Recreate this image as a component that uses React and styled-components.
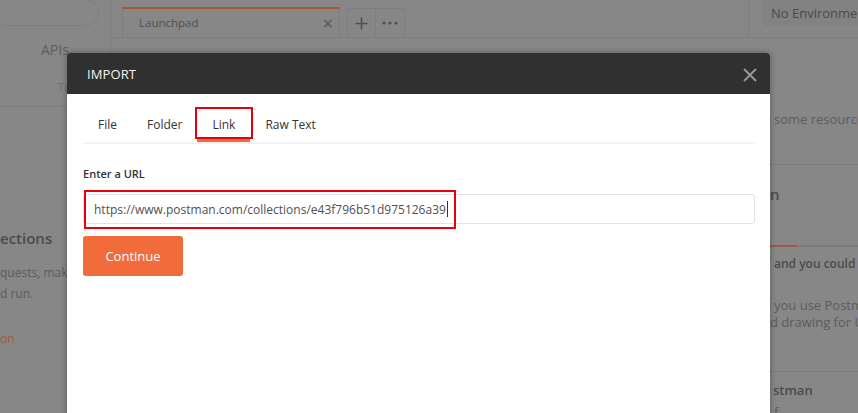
import React from "react";
import styled, { createGlobalStyle } from "styled-components";

const Global = createGlobalStyle`
  html, body { margin: 0; padding: 0; }
  body {
    font-family: "Open Sans", "Liberation Sans", sans-serif;
    overflow: hidden;
    width: 858px;
    height: 413px;
  }
  * { box-sizing: border-box; }
`;

const Root = styled.div`
  position: relative;
  width: 858px;
  height: 413px;
  overflow: hidden;
  background: #878787;
  display: flex;
`;

/* ---------- dimmed background app ---------- */
const Sidebar = styled.aside`
  width: 111px;
  flex: none;
  border-right: 1px solid #7e7e7e;
  display: flex;
  flex-direction: column;
  overflow: hidden;
`;

const SearchPill = styled.div`
  margin: -1px 0 0 -12px;
  width: 111px;
  height: 27px;
  border: 1px solid #7f7f7f;
  border-radius: 14px;
`;

const SideLink = styled.div`
  font-size: ${(p) => (p.$small ? "13px" : "14px")};
  color: ${(p) => (p.$small ? "#747474" : "#5c5c5c")};
  line-height: 18px;
  padding-left: ${(p) => p.$indent}px;
  margin-top: ${(p) => p.$mt}px;
  white-space: nowrap;
`;

const Divider = styled.div`
  height: 1px;
  background: #7c7c7c;
  margin-top: ${(p) => p.$mt || 0}px;
`;

const Heading = styled.div`
  font-size: ${(p) => p.$size || 15}px;
  font-weight: 600;
  color: #4b4b4b;
  line-height: 20px;
  margin-top: ${(p) => p.$mt}px;
  padding-left: ${(p) => p.$pl || 0}px;
  white-space: nowrap;
`;

const Para = styled.div`
  font-size: ${(p) => p.$size || 12}px;
  color: ${(p) => (p.$accent ? "#a3573b" : "#5c5c5c")};
  line-height: ${(p) => p.$lh || 21}px;
  margin-top: ${(p) => p.$mt || 0}px;
  padding-left: ${(p) => p.$pl || 0}px;
  white-space: nowrap;
`;

const Main = styled.main`
  flex: 1;
  display: flex;
  flex-direction: column;
  min-width: 0;
`;

const TopBar = styled.div`
  height: 38px;
  flex: none;
  display: flex;
  border-bottom: 1px solid #7d7d7d;
`;

const TabStrip = styled.div`
  flex: 1;
  display: flex;
  align-items: flex-end;
  padding-left: 11px;
`;

const AppTab = styled.div`
  width: 218px;
  height: 30px;
  border: 1px solid #7e7e7e;
  border-bottom: none;
  border-top: 2px solid #a3573b;
  display: flex;
  align-items: center;
  justify-content: space-between;
  padding: 0 6px 1px 16px;
  font-size: 11.5px;
  color: #505050;
`;

const TabClose = styled.span`
  font-size: 18px;
  color: #555;
  line-height: 1;
`;

const StripButton = styled.div`
  width: 29px;
  height: 29px;
  margin-left: ${(p) => p.$ml || 0}px;
  border: 1px solid #7e7e7e;
  border-bottom: none;
  border-left: ${(p) => (p.$join ? "none" : "1px solid #7e7e7e")};
  display: flex;
  align-items: center;
  justify-content: center;
  color: #505050;
`;

const EnvArea = styled.div`
  width: 110px;
  flex: none;
  border-left: 1px solid #7e7e7e;
  padding-left: 13px;
`;

const EnvSelect = styled.div`
  height: 26px;
  background: #828282;
  border-radius: 0 0 0 4px;
  font-size: 13px;
  color: #4a4a4a;
  padding: 4px 0 0 9px;
  white-space: nowrap;
  overflow: hidden;
`;

const Content = styled.div`
  flex: 1;
  display: flex;
`;

const RightCol = styled.div`
  margin-left: auto;
  width: 88px;
  overflow: hidden;
  display: flex;
  flex-direction: column;
`;

const TabLine = styled.div`
  display: flex;
  margin-top: ${(p) => p.$mt}px;
  height: 2px;
  background: #7c7c7c;
`;

const TabLineActive = styled.div`
  width: 27px;
  background: #a3573b;
`;

/* ---------- modal ---------- */
const Backdrop = styled.div`
  position: absolute;
  inset: 0;
`;

const Modal = styled.div`
  position: absolute;
  left: 67px;
  top: 53px;
  width: 703px;
  height: 420px;
  background: #fff;
  border-radius: 3px 3px 0 0;
  box-shadow: 0 0 6px rgba(0, 0, 0, 0.35);
  display: flex;
  flex-direction: column;
`;

const ModalHeader = styled.div`
  height: 41px;
  background: #303030;
  border-radius: 3px 3px 0 0;
  display: flex;
  align-items: center;
  justify-content: space-between;
  padding: 0 12px 0 20px;
`;

const ModalTitle = styled.div`
  color: #f2f2f2;
  font-size: 13px;
  letter-spacing: 0.1px;
`;

const CloseButton = styled.div`
  width: 16px;
  height: 16px;
  display: flex;
  align-items: center;
  justify-content: center;
  margin-top: 2px;
`;

const ModalBody = styled.div`
  padding: 15px 15px 0 16px;
  display: flex;
  flex-direction: column;
`;

const Tabs = styled.div`
  display: flex;
  border-bottom: 2px solid #f2f2f2;
`;

const Tab = styled.div`
  position: relative;
  height: 33px;
  padding: 1px 15px 0;
  display: flex;
  align-items: center;
  font-size: 12px;
  color: #333;
  border-bottom: 3px solid ${(p) => (p.$active ? "#f26b3a" : "transparent")};
  ${(p) =>
    p.$marked &&
    `
    &::after {
      content: "";
      position: absolute;
      left: -2px;
      right: -3px;
      top: -2px;
      bottom: 0;
      border: 2px solid #e8000b;
    }
  `}
`;

const Label = styled.div`
  margin-top: 22px;
  font-size: 11px;
  font-weight: 600;
  color: #333;
  line-height: 16px;
`;

const InputWrap = styled.div`
  position: relative;
  margin-top: 12px;
`;

const UrlInput = styled.div`
  height: 30px;
  border: 1px solid #e3e3e3;
  border-radius: 3px;
  display: flex;
  align-items: center;
  padding-left: 10px;
  font-size: 12px;
  color: #505050;
  white-space: nowrap;
`;

const Caret = styled.span`
  display: inline-block;
  width: 1px;
  height: 16px;
  background: #333;
  margin-left: 1px;
`;

const Highlight = styled.div`
  position: absolute;
  left: 1px;
  top: -4px;
  width: 372px;
  height: 39px;
  border: 2px solid #e8000b;
  pointer-events: none;
`;

const PrimaryButton = styled.button`
  margin-top: 12px;
  width: 100px;
  height: 40px;
  border: none;
  border-radius: 3px;
  background: #f26b3a;
  color: #fff;
  font-family: inherit;
  font-size: 13px;
  padding: 0;
  cursor: pointer;
`;

export default function App() {
  return (
    <>
      <Global />
      <Root>
        <Sidebar>
          <SearchPill />
          <SideLink $indent={41} $mt={15}>APIs</SideLink>
          <SideLink $small $indent={57} $mt={19}>Trash</SideLink>
          <Divider $mt={10} />
          <Heading $mt={121}>ections</Heading>
          <Para $mt={14}>quests, make</Para>
          <Para>d run.</Para>
          <Para $accent $mt={24}>on</Para>
        </Sidebar>
        <Main>
          <TopBar>
            <TabStrip>
              <AppTab>
                <span>Launchpad</span>
                <TabClose>×</TabClose>
              </AppTab>
              <StripButton $ml={7}>
                <svg width="13" height="13" viewBox="0 0 13 13">
                  <path d="M6.5 0.5v12M0.5 6.5h12" stroke="#505050" strokeWidth="1.6" />
                </svg>
              </StripButton>
              <StripButton $join>
                <svg width="16" height="4" viewBox="0 0 16 4">
                  <circle cx="2" cy="2" r="1.6" fill="#505050" />
                  <circle cx="8" cy="2" r="1.6" fill="#505050" />
                  <circle cx="14" cy="2" r="1.6" fill="#505050" />
                </svg>
              </StripButton>
            </TabStrip>
            <EnvArea>
              <EnvSelect>No Environment</EnvSelect>
            </EnvArea>
          </TopBar>
          <Content>
            <RightCol>
              <Para $size={13} $lh={18} $pl={4} $mt={72}>some resources</Para>
              <Divider $mt={36} />
              <Heading $mt={19}>n</Heading>
              <TabLine $mt={41}>
                <TabLineActive />
              </TabLine>
              <Heading $size={12} $pl={4} $mt={7}>and you could</Heading>
              <Para $size={13} $lh={17} $pl={4} $mt={23}>you use Postman</Para>
              <Para $size={13} $lh={17} $pl={0}>d drawing for USE</Para>
              <Divider $mt={40} />
              <Heading $size={13} $pl={3} $mt={8}>stman</Heading>
              <Para $size={13} $lh={17} $pl={4} $mt={4}>f</Para>
            </RightCol>
          </Content>
        </Main>

        <Backdrop />
        <Modal>
          <ModalHeader>
            <ModalTitle>IMPORT</ModalTitle>
            <CloseButton>
              <svg width="14" height="14" viewBox="0 0 14 14">
                <path d="M1 1L13 13M13 1L1 13" stroke="#9a9a9a" strokeWidth="1.8" />
              </svg>
            </CloseButton>
          </ModalHeader>
          <ModalBody>
            <Tabs>
              <Tab>File</Tab>
              <Tab>Folder</Tab>
              <Tab $active $marked>Link</Tab>
              <Tab>Raw Text</Tab>
            </Tabs>
            <Label>Enter a URL</Label>
            <InputWrap>
              <UrlInput>
                https://www.postman.com/collections/e43f796b51d975126a39
                <Caret />
              </UrlInput>
              <Highlight />
            </InputWrap>
            <div>
              <PrimaryButton>Continue</PrimaryButton>
            </div>
          </ModalBody>
        </Modal>
      </Root>
    </>
  );
}
